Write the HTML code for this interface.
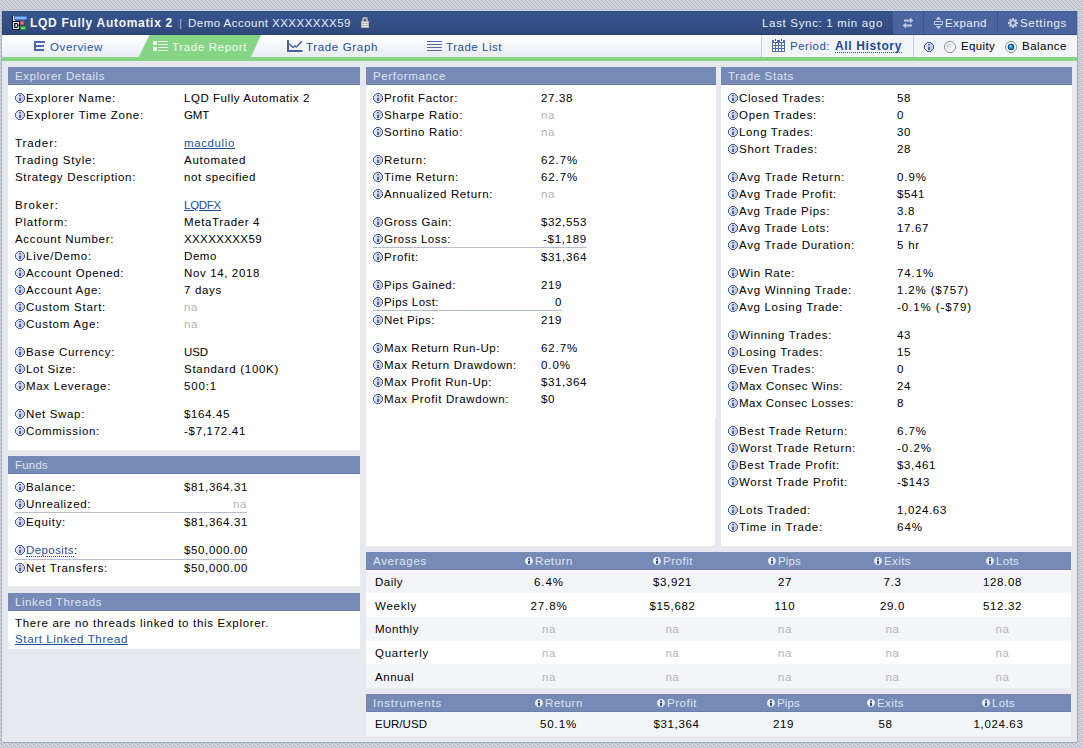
<!DOCTYPE html>
<html><head><meta charset="utf-8"><title>Trade Report</title>
<style>
html,body{margin:0;padding:0;}
body{width:1083px;height:748px;overflow:hidden;position:relative;background:#ccd3df;font-family:"Liberation Sans",sans-serif;font-size:11.5px;color:#000;}
#bg{position:absolute;left:0;top:0;width:1083px;height:748px;}
#frame{position:absolute;left:2px;top:11px;width:1075px;height:731px;background:#e7e9ee;box-shadow:-1px 0 0 rgba(95,100,110,.2),1px 0 0 rgba(95,100,110,.32),0 1px 0 rgba(95,100,110,.32);}
.abs{position:absolute;}
#title{left:2px;top:11px;width:1075px;height:24px;background:linear-gradient(#39558e,#36528a 30%,#324d82 65%,#30487a);box-shadow:inset 0 -1px 0 #2b406f,inset 0 1px 0 #33508c;}
#btns{left:893px;top:11px;width:184px;height:24px;background:#49649f;box-shadow:inset 0 -1px 0 #3b5288,inset 0 1px 0 #4261a4,inset -1px 0 0 #4261a4;}
.vsep{width:1px;top:11px;height:24px;background:#3a548d;}
#tabs{left:2px;top:35px;width:1075px;height:22px;background:linear-gradient(#ffffff,#f6f7fa 45%,#e9ebf1);}
#green{left:2px;top:57px;width:1075px;height:4px;background:#86d587;}
#period{left:761px;top:35px;width:316px;height:22px;background:#f3f5f9;border-left:1px solid #c9cfdc;box-sizing:border-box;}
#psep{left:913px;top:35px;width:1px;height:22px;background:#c9cfdc;}
.panel{position:absolute;background:#fff;}
.phd{position:absolute;height:18px;background:#768ab6;box-shadow:inset 0 -1px 0 #6b7fac;}
.rowa{position:absolute;left:366px;width:705px;background:#f4f5f9;}
.rowb{position:absolute;left:366px;width:705px;background:#fff;}
.hl{position:absolute;height:1px;background:#b5bdd3;}
.t{position:absolute;white-space:pre;line-height:14px;height:14px;}
.na{color:#b4b4b4;}
.lnk{color:#1f4f9d;text-decoration:underline;}
.dot{color:#1f4f9d;border-bottom:1px dotted #1f4f9d;height:13px;}
.ph{color:#dde4f3;}
.tt{color:#e9eef8;}
.b{font-weight:bold;}
.tt.b{color:#f4f7fc;}
.tab.b{color:#17489a;}
.sep{color:#aebbd6;}
.tab{color:#22509f;}
.tabsel{color:#f6fcee;}
.dot2{border-bottom:1px dotted #22509f;height:13px;}
.ii{position:absolute;overflow:visible;}

</style></head>
<body>
<svg id="bg" width="1083" height="748" shape-rendering="crispEdges">
<defs>
<pattern id="hatch" width="4" height="4" patternUnits="userSpaceOnUse">
<rect width="4" height="4" fill="#ccd3df"/>
<rect x="1" y="0" width="1" height="1" fill="#b4babd"/>
<rect x="2" y="1" width="1" height="1" fill="#b4babd"/>
<rect x="3" y="2" width="1" height="1" fill="#b4babd"/>
<rect x="0" y="3" width="1" height="1" fill="#b4babd"/>
</pattern>
<g id="ii" shape-rendering="crispEdges"><linearGradient id="iig" x1="0" y1="0" x2="1" y2="0"><stop offset="0" stop-color="#e8e9f0"/><stop offset="1" stop-color="#c0c5d9"/></linearGradient><circle cx="5" cy="5" r="4.2" fill="url(#iig)" shape-rendering="auto"/><rect x="1" y="1" width="1" height="1" fill="#c3c7dc"/><rect x="8" y="1" width="1" height="1" fill="#c3c7dc"/><rect x="1" y="8" width="1" height="1" fill="#c3c7dc"/><rect x="8" y="8" width="1" height="1" fill="#c3c7dc"/><rect x="3" y="0" width="4" height="1" fill="#475fa5"/><rect x="2" y="1" width="1" height="1" fill="#475fa5"/><rect x="7" y="1" width="1" height="1" fill="#475fa5"/><rect x="1" y="2" width="1" height="1" fill="#475fa5"/><rect x="8" y="2" width="1" height="1" fill="#475fa5"/><rect x="0" y="3" width="1" height="1" fill="#475fa5"/><rect x="9" y="3" width="1" height="1" fill="#475fa5"/><rect x="0" y="4" width="1" height="1" fill="#475fa5"/><rect x="9" y="4" width="1" height="1" fill="#475fa5"/><rect x="0" y="5" width="1" height="1" fill="#475fa5"/><rect x="9" y="5" width="1" height="1" fill="#475fa5"/><rect x="0" y="6" width="1" height="1" fill="#475fa5"/><rect x="9" y="6" width="1" height="1" fill="#475fa5"/><rect x="1" y="7" width="1" height="1" fill="#475fa5"/><rect x="8" y="7" width="1" height="1" fill="#475fa5"/><rect x="2" y="8" width="1" height="1" fill="#475fa5"/><rect x="7" y="8" width="1" height="1" fill="#475fa5"/><rect x="3" y="9" width="4" height="1" fill="#475fa5"/><rect x="4" y="2" width="2" height="1" fill="#4a62a6"/><rect x="4" y="3" width="2" height="1" fill="#4a62a6" opacity=".25"/><rect x="4" y="5" width="2" height="3" fill="#4a62a6"/><rect x="4" y="4" width="2" height="1" fill="#4a62a6" opacity=".2"/></g>
<g id="si"><linearGradient id="sig" x1="0" y1="0" x2="1" y2="1"><stop offset="0" stop-color="#ffffff"/><stop offset="1" stop-color="#d9deeb"/></linearGradient><circle cx="4" cy="4" r="4.2" fill="url(#sig)" stroke="#5c70a4" stroke-width=".6" stroke-opacity=".6"/><rect x="3" y="1.3" width="2" height="1.5" fill="#33488a"/><rect x="3" y="3.6" width="2" height="3.2" fill="#33488a"/></g>
</defs>
<rect width="1083" height="748" fill="url(#hatch)"/>
</svg>
<div id="frame"></div>
<div id="title" class="abs"></div>
<div id="btns" class="abs"></div>
<div class="abs vsep" style="left:923px"></div>
<div class="abs vsep" style="left:997px"></div>
<div id="tabs" class="abs"></div>
<div id="period" class="abs"></div>
<div id="psep" class="abs"></div>
<svg class="abs" style="left:130px;top:35px" width="140" height="22"><polygon points="19.5,0 131,0 121,22 8.7,22" fill="#86d587"/></svg>
<div id="green" class="abs"></div>

<!-- panels -->
<div class="panel" style="left:8px;top:67px;width:352px;height:383px"></div>
<div class="phd" style="left:8px;top:67px;width:352px"></div>
<div class="panel" style="left:8px;top:456px;width:352px;height:130px"></div>
<div class="phd" style="left:8px;top:456px;width:352px"></div>
<div class="panel" style="left:8px;top:593px;width:352px;height:56px"></div>
<div class="phd" style="left:8px;top:593px;width:352px"></div>
<div class="panel" style="left:366px;top:67px;width:349px;height:479px"></div><div class="panel" style="left:366px;top:67px;width:350px;height:351px"></div>
<div class="phd" style="left:366px;top:67px;width:350px"></div>
<div class="panel" style="left:721px;top:67px;width:351px;height:479px"></div>
<div class="phd" style="left:721px;top:67px;width:351px"></div>
<!-- averages -->
<div class="phd" style="left:366px;top:552px;width:705px"></div>
<div class="rowa" style="top:570px;height:23px"></div>
<div class="rowb" style="top:593px;height:24px"></div>
<div class="rowa" style="top:617px;height:24px"></div>
<div class="rowb" style="top:641px;height:23px"></div>
<div class="rowa" style="top:664px;height:24px"></div>
<div class="phd" style="left:366px;top:694px;width:705px"></div>
<div class="rowa" style="top:712px;height:24px"></div>
<!-- separators -->
<div class="hl" style="left:15px;top:512px;width:232px"></div>
<div class="hl" style="left:15px;top:559px;width:232px"></div>
<div class="hl" style="left:373px;top:247px;width:214px"></div>
<div class="hl" style="left:373px;top:310px;width:189px"></div>


<!-- title logo icon -->
<svg class="abs" style="left:12px;top:16px" width="16" height="14" viewBox="0 0 16 14" shape-rendering="crispEdges">
<rect x="0" y="0" width="2" height="14" fill="#0b1430"/>
<rect x="0" y="5" width="8" height="9" fill="#0b1430"/>
<rect x="1" y="0" width="1" height="5" fill="#e6e9f4"/><rect x="1" y="4" width="2" height="1" fill="#e6e9f4"/>
<rect x="2" y="0" width="13" height="4" fill="#3f82e6"/><rect x="3" y="1.4" width="11" height="1.3" fill="#8fb3ec"/>
<rect x="1" y="6" width="6" height="7" fill="#dfe3ee"/>
<path d="M2.2 7.1h2c1.7 0 2.3 1.1 2.3 2.4s-.6 2.4-2.3 2.4h-2z M3.4 8.1v2.8h.8c.8 0 1.1-.6 1.1-1.4s-.3-1.4-1.1-1.4z" fill="#000" fill-rule="evenodd" shape-rendering="auto"/>
<rect x="8" y="5" width="4" height="4" rx="0.8" fill="#e8393a" shape-rendering="auto"/><rect x="9" y="6.2" width="2" height="1.3" fill="#fb8a8a"/>
<rect x="8" y="10" width="6" height="4" rx="0.8" fill="#12a012" shape-rendering="auto"/><rect x="9" y="11.3" width="4" height="1.4" fill="#80cf80"/>
</svg>
<!-- lock -->
<svg class="abs" style="left:361px;top:17px" width="8" height="11" viewBox="0 0 8 11">
<path d="M1 4.5V2.4A2.4 2.4 0 0 1 3.4 0h1.2A2.4 2.4 0 0 1 7 2.4V4.5H5V2.8a.8 .8 0 0 0-.8-.8h-.4a.8 .8 0 0 0-.8 .8V4.5z" fill="#b3aea6"/>
<g shape-rendering="crispEdges"><rect x="0" y="4" width="8" height="7" fill="#b3aea6"/>
<rect x="1" y="5" width="6" height="1" fill="#e9e9e9"/><rect x="1" y="7" width="6" height="1" fill="#e9e9e9"/><rect x="1" y="9" width="6" height="1" fill="#e9e9e9"/></g>
</svg>
<!-- swap arrows -->
<svg class="abs" style="left:902px;top:17px" width="12" height="12" viewBox="0 0 12 12" fill="#c0c9df">
<path d="M2 2.4h6V0.6l3.3 2.8L8 6.2V4.5H2z"/>
<path d="M10 7.4H4V5.6L0.7 8.4 4 11.2V9.5h6z"/>
</svg>
<!-- expand -->
<svg class="abs" style="left:933px;top:16px" width="11" height="14" viewBox="0 0 11 14">
<path d="M5.5 0.5l2.8 3.2H2.7z M5.5 13.3l2.8-3.2H2.7z" fill="#c0c9df"/>
<rect x="1.5" y="5.5" width="8" height="3" fill="none" stroke="#c0c9df" stroke-width="1"/>
</svg>
<!-- gear -->
<svg class="abs" style="left:1008px;top:18px" width="10" height="10" viewBox="0 0 10 10">
<g fill="#c0c9df"><circle cx="5" cy="5" r="3.6"/>
<rect x="4" y="0" width="2" height="10"/><rect x="0" y="4" width="10" height="2"/>
<rect x="4" y="0" width="2" height="10" transform="rotate(45 5 5)"/><rect x="4" y="0" width="2" height="10" transform="rotate(-45 5 5)"/></g>
<circle cx="5" cy="5" r="1.7" fill="#4a649f"/>
</svg>
<!-- overview E icon -->
<svg class="abs" style="left:34px;top:41px" width="12" height="10" viewBox="0 0 12 10" fill="#4f67a6" shape-rendering="crispEdges">
<rect x="0" y="0" width="2" height="10"/><rect x="0" y="0" width="11" height="2"/><rect x="0" y="4" width="9.5" height="1.6"/><rect x="0" y="8" width="10" height="2"/>
</svg>
<!-- trade report icon -->
<svg class="abs" style="left:153px;top:41px" width="15" height="10" viewBox="0 0 15 10" fill="#f4fbee">
<rect x="0" y="0" width="4" height="4" rx="0.7"/><rect x="0" y="6" width="4" height="4" rx="0.7"/>
<rect x="5" y="0" width="10" height="1"/><rect x="5" y="3" width="10" height="1"/><rect x="5" y="6" width="10" height="1"/><rect x="5" y="9" width="10" height="1"/>
</svg>
<!-- trade graph icon -->
<svg class="abs" style="left:287px;top:40px" width="16" height="12" viewBox="0 0 16 12" fill="none" stroke="#4a62a2">
<path d="M1 0v11h14.5" stroke-width="2"/>
<path d="M2 3.8l4 3.6 2-1.4 1.2 1 5.8-5.6" stroke-width="1.5"/>
</svg>
<!-- trade list icon -->
<svg class="abs" style="left:427px;top:41px" width="15" height="10" viewBox="0 0 15 10" fill="#5668a8" shape-rendering="crispEdges">
<rect x="0" y="0" width="15" height="1"/><rect x="0" y="3" width="15" height="1"/><rect x="0" y="6" width="15" height="1"/><rect x="0" y="9" width="15" height="1"/>
</svg>
<!-- calendar -->
<svg class="abs" style="left:771px;top:38px" width="15" height="15" viewBox="0 0 15 15" shape-rendering="crispEdges">
<rect x="1" y="2" width="13" height="12" fill="#506aaa"/>
<rect x="3" y="1" width="3" height="3" fill="#fbfcfd"/><rect x="9" y="1" width="3" height="3" fill="#fbfcfd"/>
<rect x="4" y="1" width="1" height="2" fill="#3c5090"/><rect x="10" y="1" width="1" height="2" fill="#3c5090"/>
<g fill="#fff">
<rect x="2" y="5" width="2" height="2"/><rect x="5" y="5" width="2" height="2"/><rect x="8" y="5" width="2" height="2"/><rect x="11" y="5" width="2" height="2"/>
<rect x="2" y="8" width="2" height="2"/><rect x="5" y="8" width="2" height="2"/><rect x="8" y="8" width="2" height="2"/><rect x="11" y="8" width="2" height="2"/>
<rect x="2" y="11" width="2" height="2"/><rect x="5" y="11" width="2" height="2"/><rect x="8" y="11" width="2" height="2"/><rect x="11" y="11" width="2" height="2"/>
</g>
</svg>
<!-- top-right info icon -->
<svg class="ii" style="left:924px;top:42px" width="10" height="10" viewBox="0 0 10 10"><use href="#ii"/></svg>
<!-- radios -->
<svg class="abs" style="left:943px;top:40px" width="14" height="14" viewBox="0 0 14 14">
<defs><linearGradient id="rg" x1="0.15" y1="0.15" x2="0.85" y2="0.85"><stop offset="0" stop-color="#c4c9d3"/><stop offset=".6" stop-color="#f1f2f4"/><stop offset="1" stop-color="#ffffff"/></linearGradient>
<radialGradient id="bl" cx=".4" cy=".32" r=".65"><stop offset="0" stop-color="#b4ecff"/><stop offset=".35" stop-color="#2f9fe0"/><stop offset="1" stop-color="#1583cf"/></radialGradient></defs>
<circle cx="7" cy="7" r="5.5" fill="#ffffff" stroke="#8b8b8b" stroke-width="1"/>
<circle cx="7" cy="7" r="3.7" fill="url(#rg)"/>
</svg>
<svg class="abs" style="left:1004px;top:40px" width="14" height="14" viewBox="0 0 14 14">
<circle cx="7" cy="7" r="5.5" fill="#ffffff" stroke="#8b8b8b" stroke-width="1"/>
<circle cx="7" cy="7" r="2.9" fill="url(#bl)" stroke="#0f355c" stroke-width="1"/>
</svg>

<svg class="ii" style="left:15px;top:93px" width="10" height="10" viewBox="0 0 10 10"><use href="#ii"/></svg>
<svg class="ii" style="left:15px;top:110px" width="10" height="10" viewBox="0 0 10 10"><use href="#ii"/></svg>
<svg class="ii" style="left:15px;top:251px" width="10" height="10" viewBox="0 0 10 10"><use href="#ii"/></svg>
<svg class="ii" style="left:15px;top:268px" width="10" height="10" viewBox="0 0 10 10"><use href="#ii"/></svg>
<svg class="ii" style="left:15px;top:285px" width="10" height="10" viewBox="0 0 10 10"><use href="#ii"/></svg>
<svg class="ii" style="left:15px;top:302px" width="10" height="10" viewBox="0 0 10 10"><use href="#ii"/></svg>
<svg class="ii" style="left:15px;top:319px" width="10" height="10" viewBox="0 0 10 10"><use href="#ii"/></svg>
<svg class="ii" style="left:15px;top:347px" width="10" height="10" viewBox="0 0 10 10"><use href="#ii"/></svg>
<svg class="ii" style="left:15px;top:364px" width="10" height="10" viewBox="0 0 10 10"><use href="#ii"/></svg>
<svg class="ii" style="left:15px;top:381px" width="10" height="10" viewBox="0 0 10 10"><use href="#ii"/></svg>
<svg class="ii" style="left:15px;top:409px" width="10" height="10" viewBox="0 0 10 10"><use href="#ii"/></svg>
<svg class="ii" style="left:15px;top:426px" width="10" height="10" viewBox="0 0 10 10"><use href="#ii"/></svg>
<svg class="ii" style="left:15px;top:482px" width="10" height="10" viewBox="0 0 10 10"><use href="#ii"/></svg>
<svg class="ii" style="left:15px;top:499px" width="10" height="10" viewBox="0 0 10 10"><use href="#ii"/></svg>
<svg class="ii" style="left:15px;top:517px" width="10" height="10" viewBox="0 0 10 10"><use href="#ii"/></svg>
<svg class="ii" style="left:15px;top:545px" width="10" height="10" viewBox="0 0 10 10"><use href="#ii"/></svg>
<svg class="ii" style="left:15px;top:563px" width="10" height="10" viewBox="0 0 10 10"><use href="#ii"/></svg>
<svg class="ii" style="left:373px;top:93px" width="10" height="10" viewBox="0 0 10 10"><use href="#ii"/></svg>
<svg class="ii" style="left:373px;top:110px" width="10" height="10" viewBox="0 0 10 10"><use href="#ii"/></svg>
<svg class="ii" style="left:373px;top:127px" width="10" height="10" viewBox="0 0 10 10"><use href="#ii"/></svg>
<svg class="ii" style="left:373px;top:155px" width="10" height="10" viewBox="0 0 10 10"><use href="#ii"/></svg>
<svg class="ii" style="left:373px;top:172px" width="10" height="10" viewBox="0 0 10 10"><use href="#ii"/></svg>
<svg class="ii" style="left:373px;top:189px" width="10" height="10" viewBox="0 0 10 10"><use href="#ii"/></svg>
<svg class="ii" style="left:373px;top:217px" width="10" height="10" viewBox="0 0 10 10"><use href="#ii"/></svg>
<svg class="ii" style="left:373px;top:234px" width="10" height="10" viewBox="0 0 10 10"><use href="#ii"/></svg>
<svg class="ii" style="left:373px;top:252px" width="10" height="10" viewBox="0 0 10 10"><use href="#ii"/></svg>
<svg class="ii" style="left:373px;top:280px" width="10" height="10" viewBox="0 0 10 10"><use href="#ii"/></svg>
<svg class="ii" style="left:373px;top:297px" width="10" height="10" viewBox="0 0 10 10"><use href="#ii"/></svg>
<svg class="ii" style="left:373px;top:315px" width="10" height="10" viewBox="0 0 10 10"><use href="#ii"/></svg>
<svg class="ii" style="left:373px;top:343px" width="10" height="10" viewBox="0 0 10 10"><use href="#ii"/></svg>
<svg class="ii" style="left:373px;top:360px" width="10" height="10" viewBox="0 0 10 10"><use href="#ii"/></svg>
<svg class="ii" style="left:373px;top:377px" width="10" height="10" viewBox="0 0 10 10"><use href="#ii"/></svg>
<svg class="ii" style="left:373px;top:394px" width="10" height="10" viewBox="0 0 10 10"><use href="#ii"/></svg>
<svg class="ii" style="left:728px;top:93px" width="10" height="10" viewBox="0 0 10 10"><use href="#ii"/></svg>
<svg class="ii" style="left:728px;top:110px" width="10" height="10" viewBox="0 0 10 10"><use href="#ii"/></svg>
<svg class="ii" style="left:728px;top:127px" width="10" height="10" viewBox="0 0 10 10"><use href="#ii"/></svg>
<svg class="ii" style="left:728px;top:144px" width="10" height="10" viewBox="0 0 10 10"><use href="#ii"/></svg>
<svg class="ii" style="left:728px;top:172px" width="10" height="10" viewBox="0 0 10 10"><use href="#ii"/></svg>
<svg class="ii" style="left:728px;top:189px" width="10" height="10" viewBox="0 0 10 10"><use href="#ii"/></svg>
<svg class="ii" style="left:728px;top:206px" width="10" height="10" viewBox="0 0 10 10"><use href="#ii"/></svg>
<svg class="ii" style="left:728px;top:223px" width="10" height="10" viewBox="0 0 10 10"><use href="#ii"/></svg>
<svg class="ii" style="left:728px;top:240px" width="10" height="10" viewBox="0 0 10 10"><use href="#ii"/></svg>
<svg class="ii" style="left:728px;top:268px" width="10" height="10" viewBox="0 0 10 10"><use href="#ii"/></svg>
<svg class="ii" style="left:728px;top:285px" width="10" height="10" viewBox="0 0 10 10"><use href="#ii"/></svg>
<svg class="ii" style="left:728px;top:302px" width="10" height="10" viewBox="0 0 10 10"><use href="#ii"/></svg>
<svg class="ii" style="left:728px;top:330px" width="10" height="10" viewBox="0 0 10 10"><use href="#ii"/></svg>
<svg class="ii" style="left:728px;top:347px" width="10" height="10" viewBox="0 0 10 10"><use href="#ii"/></svg>
<svg class="ii" style="left:728px;top:364px" width="10" height="10" viewBox="0 0 10 10"><use href="#ii"/></svg>
<svg class="ii" style="left:728px;top:381px" width="10" height="10" viewBox="0 0 10 10"><use href="#ii"/></svg>
<svg class="ii" style="left:728px;top:398px" width="10" height="10" viewBox="0 0 10 10"><use href="#ii"/></svg>
<svg class="ii" style="left:728px;top:426px" width="10" height="10" viewBox="0 0 10 10"><use href="#ii"/></svg>
<svg class="ii" style="left:728px;top:443px" width="10" height="10" viewBox="0 0 10 10"><use href="#ii"/></svg>
<svg class="ii" style="left:728px;top:460px" width="10" height="10" viewBox="0 0 10 10"><use href="#ii"/></svg>
<svg class="ii" style="left:728px;top:477px" width="10" height="10" viewBox="0 0 10 10"><use href="#ii"/></svg>
<svg class="ii" style="left:728px;top:505px" width="10" height="10" viewBox="0 0 10 10"><use href="#ii"/></svg>
<svg class="ii" style="left:728px;top:522px" width="10" height="10" viewBox="0 0 10 10"><use href="#ii"/></svg>
<svg class="ii" style="left:525px;top:557px" width="8" height="8" viewBox="0 0 8 8"><use href="#si"/></svg>
<svg class="ii" style="left:653px;top:557px" width="8" height="8" viewBox="0 0 8 8"><use href="#si"/></svg>
<svg class="ii" style="left:768px;top:557px" width="8" height="8" viewBox="0 0 8 8"><use href="#si"/></svg>
<svg class="ii" style="left:874px;top:557px" width="8" height="8" viewBox="0 0 8 8"><use href="#si"/></svg>
<svg class="ii" style="left:986px;top:557px" width="8" height="8" viewBox="0 0 8 8"><use href="#si"/></svg>
<svg class="ii" style="left:535px;top:699px" width="8" height="8" viewBox="0 0 8 8"><use href="#si"/></svg>
<svg class="ii" style="left:657px;top:699px" width="8" height="8" viewBox="0 0 8 8"><use href="#si"/></svg>
<svg class="ii" style="left:767px;top:699px" width="8" height="8" viewBox="0 0 8 8"><use href="#si"/></svg>
<svg class="ii" style="left:867px;top:699px" width="8" height="8" viewBox="0 0 8 8"><use href="#si"/></svg>
<svg class="ii" style="left:982px;top:699px" width="8" height="8" viewBox="0 0 8 8"><use href="#si"/></svg>
<span class="t" style="left:26px;top:91px;letter-spacing:0.72px;">Explorer Name:</span>
<span class="t" style="left:184px;top:91px;letter-spacing:0.55px;">LQD Fully Automatix 2</span>
<span class="t" style="left:26px;top:108px;letter-spacing:0.76px;">Explorer Time Zone:</span>
<span class="t" style="left:184px;top:108px;letter-spacing:-0.19px;">GMT</span>
<span class="t" style="left:15px;top:136px;letter-spacing:0.91px;">Trader:</span>
<span class="t lnk" style="left:184px;top:136px;letter-spacing:0.62px;">macdulio</span>
<span class="t" style="left:15px;top:153px;letter-spacing:0.75px;">Trading Style:</span>
<span class="t" style="left:184px;top:153px;letter-spacing:0.71px;">Automated</span>
<span class="t" style="left:15px;top:170px;letter-spacing:0.68px;">Strategy Description:</span>
<span class="t" style="left:184px;top:170px;letter-spacing:0.57px;">not specified</span>
<span class="t" style="left:15px;top:198px;letter-spacing:0.99px;">Broker:</span>
<span class="t lnk" style="left:184px;top:198px;letter-spacing:-0.27px;">LQDFX</span>
<span class="t" style="left:15px;top:215px;letter-spacing:0.78px;">Platform:</span>
<span class="t" style="left:184px;top:215px;letter-spacing:0.62px;">MetaTrader 4</span>
<span class="t" style="left:15px;top:232px;letter-spacing:0.68px;">Account Number:</span>
<span class="t" style="left:184px;top:232px;letter-spacing:0.38px;">XXXXXXXX59</span>
<span class="t" style="left:26px;top:249px;letter-spacing:0.78px;">Live/Demo:</span>
<span class="t" style="left:184px;top:249px;letter-spacing:0.58px;">Demo</span>
<span class="t" style="left:26px;top:266px;letter-spacing:0.61px;">Account Opened:</span>
<span class="t" style="left:184px;top:266px;letter-spacing:0.63px;">Nov 14, 2018</span>
<span class="t" style="left:26px;top:283px;letter-spacing:0.68px;">Account Age:</span>
<span class="t" style="left:184px;top:283px;letter-spacing:0.68px;">7 days</span>
<span class="t" style="left:26px;top:300px;letter-spacing:0.75px;">Custom Start:</span>
<span class="t  na" style="left:184px;top:300px;letter-spacing:0.6px;">na</span>
<span class="t" style="left:26px;top:317px;letter-spacing:0.74px;">Custom Age:</span>
<span class="t  na" style="left:184px;top:317px;letter-spacing:0.6px;">na</span>
<span class="t" style="left:26px;top:345px;letter-spacing:0.7px;">Base Currency:</span>
<span class="t" style="left:184px;top:345px;letter-spacing:-0.09px;">USD</span>
<span class="t" style="left:26px;top:362px;letter-spacing:0.58px;">Lot Size:</span>
<span class="t" style="left:184px;top:362px;letter-spacing:0.71px;">Standard (100K)</span>
<span class="t" style="left:26px;top:379px;letter-spacing:0.69px;">Max Leverage:</span>
<span class="t" style="left:184px;top:379px;letter-spacing:0.84px;">500:1</span>
<span class="t" style="left:26px;top:407px;letter-spacing:0.66px;">Net Swap:</span>
<span class="t" style="left:184px;top:407px;letter-spacing:0.63px;">$164.45</span>
<span class="t" style="left:26px;top:424px;letter-spacing:0.68px;">Commission:</span>
<span class="t" style="left:184px;top:424px;letter-spacing:0.7px;">-$7,172.41</span>
<span class="t" style="left:26px;top:480px;letter-spacing:0.65px;">Balance:</span>
<span class="t" style="left:184px;top:480px;letter-spacing:0.64px;">$81,364.31</span>
<span class="t" style="left:26px;top:497px;letter-spacing:0.62px;">Unrealized:</span>
<span class="t  na" style="left:233px;top:497px;letter-spacing:0.6px;">na</span>
<span class="t" style="left:26px;top:515px;letter-spacing:0.69px;">Equity:</span>
<span class="t" style="left:184px;top:515px;letter-spacing:0.64px;">$81,364.31</span>
<span class="t dot" style="left:26px;top:543px;letter-spacing:0.41px;">Deposits</span>
<span class="t" style="left:74px;top:543px;letter-spacing:1.8px;">:</span>
<span class="t" style="left:184px;top:543px;letter-spacing:0.64px;">$50,000.00</span>
<span class="t" style="left:26px;top:561px;letter-spacing:0.7px;">Net Transfers:</span>
<span class="t" style="left:184px;top:561px;letter-spacing:0.64px;">$50,000.00</span>
<span class="t" style="left:15px;top:616px;letter-spacing:0.69px;">There are no threads linked to this Explorer.</span>
<span class="t lnk" style="left:15px;top:632px;letter-spacing:0.64px;">Start Linked Thread</span>
<span class="t" style="left:384px;top:91px;letter-spacing:0.58px;">Profit Factor:</span>
<span class="t" style="left:541px;top:91px;letter-spacing:0.64px;">27.38</span>
<span class="t" style="left:384px;top:108px;letter-spacing:0.67px;">Sharpe Ratio:</span>
<span class="t  na" style="left:541px;top:108px;letter-spacing:0.6px;">na</span>
<span class="t" style="left:384px;top:125px;letter-spacing:0.67px;">Sortino Ratio:</span>
<span class="t  na" style="left:541px;top:125px;letter-spacing:0.6px;">na</span>
<span class="t" style="left:384px;top:153px;letter-spacing:0.75px;">Return:</span>
<span class="t" style="left:541px;top:153px;letter-spacing:0.88px;">62.7%</span>
<span class="t" style="left:384px;top:170px;letter-spacing:0.75px;">Time Return:</span>
<span class="t" style="left:541px;top:170px;letter-spacing:0.88px;">62.7%</span>
<span class="t" style="left:384px;top:187px;letter-spacing:0.62px;">Annualized Return:</span>
<span class="t  na" style="left:541px;top:187px;letter-spacing:0.6px;">na</span>
<span class="t" style="left:384px;top:215px;letter-spacing:0.6px;">Gross Gain:</span>
<span class="t" style="left:541px;top:215px;letter-spacing:0.63px;">$32,553</span>
<span class="t" style="left:384px;top:232px;letter-spacing:0.51px;">Gross Loss:</span>
<span class="t" style="left:543px;top:232px;letter-spacing:0.71px;">-$1,189</span>
<span class="t" style="left:384px;top:250px;letter-spacing:0.71px;">Profit:</span>
<span class="t" style="left:541px;top:250px;letter-spacing:0.63px;">$31,364</span>
<span class="t" style="left:384px;top:278px;letter-spacing:0.51px;">Pips Gained:</span>
<span class="t" style="left:541px;top:278px;letter-spacing:0.6px;">219</span>
<span class="t" style="left:384px;top:295px;letter-spacing:0.45px;">Pips Lost:</span>
<span class="t" style="left:555px;top:295px;letter-spacing:0.59px;">0</span>
<span class="t" style="left:384px;top:313px;letter-spacing:0.48px;">Net Pips:</span>
<span class="t" style="left:541px;top:313px;letter-spacing:0.6px;">219</span>
<span class="t" style="left:384px;top:341px;letter-spacing:0.59px;">Max Return Run-Up:</span>
<span class="t" style="left:541px;top:341px;letter-spacing:0.88px;">62.7%</span>
<span class="t" style="left:384px;top:358px;letter-spacing:0.64px;">Max Return Drawdown:</span>
<span class="t" style="left:541px;top:358px;letter-spacing:0.95px;">0.0%</span>
<span class="t" style="left:384px;top:375px;letter-spacing:0.57px;">Max Profit Run-Up:</span>
<span class="t" style="left:541px;top:375px;letter-spacing:0.63px;">$31,364</span>
<span class="t" style="left:384px;top:392px;letter-spacing:0.63px;">Max Profit Drawdown:</span>
<span class="t" style="left:541px;top:392px;letter-spacing:0.6px;">$0</span>
<span class="t" style="left:739px;top:91px;letter-spacing:0.62px;">Closed Trades:</span>
<span class="t" style="left:897px;top:91px;letter-spacing:0.6px;">58</span>
<span class="t" style="left:739px;top:108px;letter-spacing:0.69px;">Open Trades:</span>
<span class="t" style="left:897px;top:108px;letter-spacing:0.59px;">0</span>
<span class="t" style="left:739px;top:125px;letter-spacing:0.65px;">Long Trades:</span>
<span class="t" style="left:897px;top:125px;letter-spacing:0.6px;">30</span>
<span class="t" style="left:739px;top:142px;letter-spacing:0.77px;">Short Trades:</span>
<span class="t" style="left:897px;top:142px;letter-spacing:0.6px;">28</span>
<span class="t" style="left:739px;top:170px;letter-spacing:0.76px;">Avg Trade Return:</span>
<span class="t" style="left:897px;top:170px;letter-spacing:0.95px;">0.9%</span>
<span class="t" style="left:739px;top:187px;letter-spacing:0.74px;">Avg Trade Profit:</span>
<span class="t" style="left:897px;top:187px;letter-spacing:0.6px;">$541</span>
<span class="t" style="left:739px;top:204px;letter-spacing:0.67px;">Avg Trade Pips:</span>
<span class="t" style="left:897px;top:204px;letter-spacing:0.67px;">3.8</span>
<span class="t" style="left:739px;top:221px;letter-spacing:0.71px;">Avg Trade Lots:</span>
<span class="t" style="left:897px;top:221px;letter-spacing:0.64px;">17.67</span>
<span class="t" style="left:739px;top:238px;letter-spacing:0.73px;">Avg Trade Duration:</span>
<span class="t" style="left:897px;top:238px;letter-spacing:0.79px;">5 hr</span>
<span class="t" style="left:739px;top:266px;letter-spacing:0.61px;">Win Rate:</span>
<span class="t" style="left:897px;top:266px;letter-spacing:0.88px;">74.1%</span>
<span class="t" style="left:739px;top:283px;letter-spacing:0.71px;">Avg Winning Trade:</span>
<span class="t" style="left:897px;top:283px;letter-spacing:0.85px;">1.2% ($757)</span>
<span class="t" style="left:739px;top:300px;letter-spacing:0.68px;">Avg Losing Trade:</span>
<span class="t" style="left:897px;top:300px;letter-spacing:0.92px;">-0.1% (-$79)</span>
<span class="t" style="left:739px;top:328px;letter-spacing:0.66px;">Winning Trades:</span>
<span class="t" style="left:897px;top:328px;letter-spacing:0.6px;">43</span>
<span class="t" style="left:739px;top:345px;letter-spacing:0.61px;">Losing Trades:</span>
<span class="t" style="left:897px;top:345px;letter-spacing:0.6px;">15</span>
<span class="t" style="left:739px;top:362px;letter-spacing:0.69px;">Even Trades:</span>
<span class="t" style="left:897px;top:362px;letter-spacing:0.59px;">0</span>
<span class="t" style="left:739px;top:379px;letter-spacing:0.51px;">Max Consec Wins:</span>
<span class="t" style="left:897px;top:379px;letter-spacing:0.6px;">24</span>
<span class="t" style="left:739px;top:396px;letter-spacing:0.46px;">Max Consec Losses:</span>
<span class="t" style="left:897px;top:396px;letter-spacing:0.59px;">8</span>
<span class="t" style="left:739px;top:424px;letter-spacing:0.69px;">Best Trade Return:</span>
<span class="t" style="left:897px;top:424px;letter-spacing:0.95px;">6.7%</span>
<span class="t" style="left:739px;top:441px;letter-spacing:0.72px;">Worst Trade Return:</span>
<span class="t" style="left:897px;top:441px;letter-spacing:0.99px;">-0.2%</span>
<span class="t" style="left:739px;top:458px;letter-spacing:0.67px;">Best Trade Profit:</span>
<span class="t" style="left:897px;top:458px;letter-spacing:0.64px;">$3,461</span>
<span class="t" style="left:739px;top:475px;letter-spacing:0.7px;">Worst Trade Profit:</span>
<span class="t" style="left:897px;top:475px;letter-spacing:0.72px;">-$143</span>
<span class="t" style="left:739px;top:503px;letter-spacing:0.67px;">Lots Traded:</span>
<span class="t" style="left:897px;top:503px;letter-spacing:0.65px;">1,024.63</span>
<span class="t" style="left:739px;top:520px;letter-spacing:0.78px;">Time in Trade:</span>
<span class="t" style="left:897px;top:520px;letter-spacing:0.99px;">64%</span>
<span class="t ph" style="left:15px;top:69px;letter-spacing:0.55px;">Explorer Details</span>
<span class="t ph" style="left:15px;top:458px;letter-spacing:0.21px;">Funds</span>
<span class="t ph" style="left:15px;top:595px;letter-spacing:0.57px;">Linked Threads</span>
<span class="t ph" style="left:373px;top:69px;letter-spacing:0.65px;">Performance</span>
<span class="t ph" style="left:728px;top:69px;letter-spacing:0.63px;">Trade Stats</span>
<span class="t ph" style="left:373px;top:554px;letter-spacing:0.7px;">Averages</span>
<span class="t ph" style="left:373px;top:696px;letter-spacing:0.81px;">Instruments</span>
<span class="t ph" style="left:535px;top:554px;letter-spacing:0.58px;">Return</span>
<span class="t ph" style="left:663px;top:554px;letter-spacing:0.53px;">Profit</span>
<span class="t ph" style="left:778px;top:554px;letter-spacing:0.16px;">Pips</span>
<span class="t ph" style="left:884px;top:554px;letter-spacing:0.42px;">Exits</span>
<span class="t ph" style="left:996px;top:554px;letter-spacing:0.31px;">Lots</span>
<span class="t ph" style="left:545px;top:696px;letter-spacing:0.58px;">Return</span>
<span class="t ph" style="left:667px;top:696px;letter-spacing:0.53px;">Profit</span>
<span class="t ph" style="left:777px;top:696px;letter-spacing:0.16px;">Pips</span>
<span class="t ph" style="left:877px;top:696px;letter-spacing:0.42px;">Exits</span>
<span class="t ph" style="left:992px;top:696px;letter-spacing:0.31px;">Lots</span>
<span class="t" style="left:375px;top:575px;letter-spacing:0.49px;">Daily</span>
<span class="t" style="left:534px;top:575px;letter-spacing:0.95px;">6.4%</span>
<span class="t" style="left:653px;top:575px;letter-spacing:0.64px;">$3,921</span>
<span class="t" style="left:778px;top:575px;letter-spacing:0.6px;">27</span>
<span class="t" style="left:883.5px;top:575px;letter-spacing:0.67px;">7.3</span>
<span class="t" style="left:983px;top:575px;letter-spacing:0.64px;">128.08</span>
<span class="t" style="left:375px;top:599px;letter-spacing:0.75px;">Weekly</span>
<span class="t" style="left:530.5px;top:599px;letter-spacing:0.88px;">27.8%</span>
<span class="t" style="left:649.5px;top:599px;letter-spacing:0.63px;">$15,682</span>
<span class="t" style="left:774.5px;top:599px;letter-spacing:0.89px;">110</span>
<span class="t" style="left:880px;top:599px;letter-spacing:0.65px;">29.0</span>
<span class="t" style="left:983px;top:599px;letter-spacing:0.64px;">512.32</span>
<span class="t" style="left:375px;top:622px;letter-spacing:0.53px;">Monthly</span>
<span class="t na" style="left:542px;top:622px;letter-spacing:0.6px;">na</span>
<span class="t na" style="left:665.5px;top:622px;letter-spacing:0.6px;">na</span>
<span class="t na" style="left:778px;top:622px;letter-spacing:0.6px;">na</span>
<span class="t na" style="left:885.5px;top:622px;letter-spacing:0.6px;">na</span>
<span class="t na" style="left:995.5px;top:622px;letter-spacing:0.6px;">na</span>
<span class="t" style="left:375px;top:646px;letter-spacing:0.74px;">Quarterly</span>
<span class="t na" style="left:542px;top:646px;letter-spacing:0.6px;">na</span>
<span class="t na" style="left:665.5px;top:646px;letter-spacing:0.6px;">na</span>
<span class="t na" style="left:778px;top:646px;letter-spacing:0.6px;">na</span>
<span class="t na" style="left:885.5px;top:646px;letter-spacing:0.6px;">na</span>
<span class="t na" style="left:995.5px;top:646px;letter-spacing:0.6px;">na</span>
<span class="t" style="left:375px;top:670px;letter-spacing:0.53px;">Annual</span>
<span class="t na" style="left:542px;top:670px;letter-spacing:0.6px;">na</span>
<span class="t na" style="left:665.5px;top:670px;letter-spacing:0.6px;">na</span>
<span class="t na" style="left:778px;top:670px;letter-spacing:0.6px;">na</span>
<span class="t na" style="left:885.5px;top:670px;letter-spacing:0.6px;">na</span>
<span class="t na" style="left:995.5px;top:670px;letter-spacing:0.6px;">na</span>
<span class="t" style="left:375px;top:717px;letter-spacing:0.03px;">EUR/USD</span>
<span class="t" style="left:540px;top:717px;letter-spacing:0.88px;">50.1%</span>
<span class="t" style="left:653.5px;top:717px;letter-spacing:0.63px;">$31,364</span>
<span class="t" style="left:773px;top:717px;letter-spacing:0.6px;">219</span>
<span class="t" style="left:878.5px;top:717px;letter-spacing:0.6px;">58</span>
<span class="t" style="left:973.5px;top:717px;letter-spacing:0.65px;">1,024.63</span>
<span class="t tt b" style="left:30px;top:16px;letter-spacing:0.7px;font-size:12px;">LQD Fully Automatix 2</span>
<span class="t tt sep" style="left:179px;top:16px;letter-spacing:2px;">|</span>
<span class="t tt" style="left:188px;top:16px;letter-spacing:0.47px;">Demo Account XXXXXXXX59</span>
<span class="t tt" style="left:762px;top:16px;letter-spacing:0.68px;">Last Sync: 1 min ago</span>
<span class="t tt" style="left:945px;top:16px;letter-spacing:0.5px;">Expand</span>
<span class="t tt" style="left:1020px;top:16px;letter-spacing:0.68px;">Settings</span>
<span class="t tab" style="left:50px;top:40px;letter-spacing:0.63px;">Overview</span>
<span class="t tabsel" style="left:172px;top:40px;letter-spacing:0.64px;">Trade Report</span>
<span class="t tab" style="left:306px;top:40px;letter-spacing:0.66px;">Trade Graph</span>
<span class="t tab" style="left:446px;top:40px;letter-spacing:0.53px;">Trade List</span>
<span class="t tab" style="left:790px;top:39px;letter-spacing:0.51px;">Period:</span>
<span class="t tab b dot2" style="left:835px;top:39px;letter-spacing:0.63px;font-size:12px;">All History</span>
<span class="t" style="left:961px;top:39px;letter-spacing:0.34px;">Equity</span>
<span class="t" style="left:1022px;top:39px;letter-spacing:0.49px;">Balance</span>
</body></html>
